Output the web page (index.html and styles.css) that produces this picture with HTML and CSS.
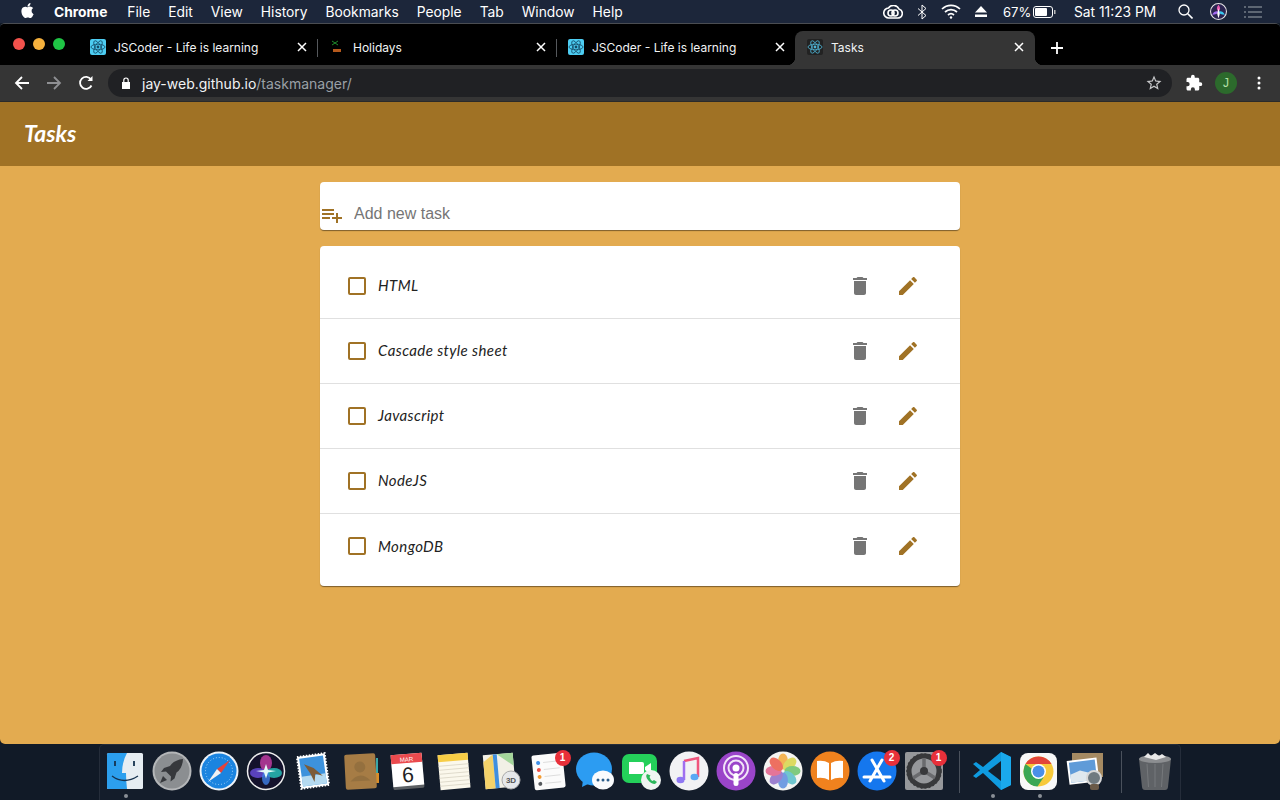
FILE: index.html
```html
<!DOCTYPE html>
<html lang="en">
<head>
  <meta charset="UTF-8">
  <title>Tasks</title>
  <link rel="stylesheet" href="styles.css">
</head>
<body>
  <svg class="defs" width="0" height="0">
    <symbol id="react" viewBox="0 0 16 16">
      <g fill="none" stroke="currentColor" stroke-width=".8">
        <ellipse cx="8" cy="8" rx="7" ry="2.8"/>
        <ellipse cx="8" cy="8" rx="7" ry="2.8" transform="rotate(60 8 8)"/>
        <ellipse cx="8" cy="8" rx="7" ry="2.8" transform="rotate(120 8 8)"/>
      </g>
      <circle cx="8" cy="8" r="1.4" fill="currentColor"/>
    </symbol>
    <symbol id="close" viewBox="0 0 10 10">
      <path d="M1 1l8 8M9 1l-8 8" stroke="currentColor" stroke-width="1.5" fill="none"/>
    </symbol>
    <symbol id="trash" viewBox="0 0 24 24">
      <path d="M6 19c0 1.1.9 2 2 2h8c1.1 0 2-.9 2-2V7H6v12zM19 4h-3.5l-1-1h-5l-1 1H5v2h14V4z"/>
    </symbol>
    <symbol id="pencil" viewBox="0 0 24 24">
      <path d="M3 17.25V21h3.75L17.81 9.94l-3.75-3.75L3 17.25zM20.71 7.04c.39-.39.39-1.02 0-1.41l-2.34-2.34c-.39-.39-1.02-.39-1.41 0l-1.83 1.83 3.75 3.75 1.83-1.83z"/>
    </symbol>
  </svg>

  <!-- mac menu bar -->
  <header class="menubar">
    <svg class="apple" viewBox="0 0 24 24" width="15" height="15" fill="#fff"><path d="M12.152 6.896c-.948 0-2.415-1.078-3.96-1.04-2.04.027-3.91 1.183-4.961 3.014-2.117 3.675-.546 9.103 1.519 12.09 1.013 1.454 2.208 3.09 3.792 3.039 1.52-.065 2.09-.987 3.935-.987 1.831 0 2.35.987 3.96.948 1.637-.026 2.676-1.48 3.676-2.948 1.156-1.688 1.636-3.325 1.662-3.415-.039-.013-3.182-1.221-3.22-4.857-.026-3.04 2.48-4.494 2.597-4.559-1.429-2.09-3.623-2.324-4.39-2.376-2-.156-3.675 1.09-4.61 1.09zM15.53 3.83c.843-1.012 1.4-2.427 1.245-3.83-1.207.052-2.662.805-3.532 1.818-.78.896-1.454 2.338-1.273 3.714 1.338.104 2.715-.688 3.559-1.701"/></svg>
    <nav class="menu">
      <b>Chrome</b><span class="menu-first">File</span><span>Edit</span><span>View</span><span>History</span><span>Bookmarks</span><span>People</span><span>Tab</span><span>Window</span><span>Help</span>
    </nav>
    <div class="status">
      <svg class="st-cc" viewBox="0 0 20 14" width="20" height="14" fill="none" stroke="#fff" stroke-width="1.6"><path d="M6 13a5 5 0 0 1-.5-10A6 6 0 0 1 16 4a4.6 4.6 0 0 1-1 9z"/><circle cx="8" cy="8" r="3"/><circle cx="12" cy="8" r="3"/></svg>
      <svg class="st-bt" viewBox="0 0 10 16" width="10" height="16" fill="none" stroke="#fff" stroke-width="1"><path d="M1 4.5l8 7L5 15V1l4 3.500L1 11.500"/></svg>
      <svg class="st-wifi" viewBox="0 0 20 15" width="20" height="15" fill="none" stroke="#fff" stroke-width="1.7"><path d="M1 5a13 13 0 0 1 18 0M4 8a9 9 0 0 1 12 0M7 11a4.500 4.500 0 0 1 6 0"/><circle cx="10" cy="13.500" r="1.200" fill="#fff" stroke="none"/></svg>
      <svg class="st-eject" viewBox="0 0 12 11" width="12" height="11" fill="#fff"><path d="M6 0l6 6.500H0zM0 8.500h12V11H0z"/></svg>
      <span class="st-pct">67%</span>
      <svg class="st-batt" viewBox="0 0 23 12" width="23" height="12"><rect x=".5" y=".5" width="19" height="11" rx="2.500" fill="none" stroke="#fff"/><rect x="2" y="2" width="12" height="8" rx="1" fill="#fff"/><rect x="21" y="4" width="1.500" height="4" fill="#bbb"/></svg>
      <span class="st-clock">Sat 11:23 PM</span>
      <svg class="st-search" viewBox="0 0 15 15" width="15" height="15" fill="none" stroke="#fff" stroke-width="1.300"><circle cx="6" cy="6" r="5"/><path d="M9.800 9.800L14.500 14.500" stroke-width="1.600"/></svg>
      <svg class="st-siri" viewBox="0 0 16 16" width="17" height="17"><circle cx="8" cy="8" r="7.500" fill="#2b2450" stroke="#e6e6e6"/><path d="M8 1.500Q11 6 8 8 5 6 8 1.500z" fill="#e85bb0"/><path d="M14 11Q9 11 8 8q4-1 6 3z" fill="#38c8f0"/><path d="M2 11q5 0 6-3-4-1-6 3z" fill="#a36bf0"/><path d="M8 5l1.200 5L8 14.500 6.800 10z" fill="#fff"/></svg>
      <svg class="st-list" viewBox="0 0 18 12" width="18" height="12" fill="#5d6673"><path d="M0 0h2v2H0zM4 0h14v2H4zM0 5h2v2H0zM4 5h14v2H4zM0 10h2v2H0zM4 10h14v2H4z"/></svg>
    </div>
  </header>

  <div class="window">
    <div class="tabstrip">
      <div class="traffic"><i class="red"></i><i class="amber"></i><i class="green"></i></div>
      <div class="tab">
        <svg class="favicon fav-cyan"><use href="#react"/></svg>
        <span class="tab-title">JSCoder - Life is learning</span>
        <svg class="tab-x"><use href="#close"/></svg>
      </div>
      <div class="tab tab-sep">
        <svg class="favicon" viewBox="0 0 16 16"><path d="M3 2l3 2-3 2M9 2L6 4l3 2" stroke="#1f8a2c" fill="none"/><path d="M4 10h8v3H4z" fill="#b5591c"/></svg>
        <span class="tab-title">Holidays</span>
        <svg class="tab-x"><use href="#close"/></svg>
      </div>
      <div class="tab tab-sep">
        <svg class="favicon fav-cyan"><use href="#react"/></svg>
        <span class="tab-title">JSCoder - Life is learning</span>
        <svg class="tab-x"><use href="#close"/></svg>
      </div>
      <div class="tab tab-active">
        <svg class="favicon fav-dark"><use href="#react"/></svg>
        <span class="tab-title">Tasks</span>
        <svg class="tab-x"><use href="#close"/></svg>
      </div>
      <svg class="newtab" viewBox="0 0 12 12" width="12" height="12"><path d="M6 0v12M0 6h12" stroke="#fff" stroke-width="1.800"/></svg>
    </div>

    <div class="toolbar">
      <svg class="tb-btn" viewBox="0 0 16 16" width="16" height="16" fill="none" stroke="#fff" stroke-width="1.800"><path d="M15 8H2M8 2L2 8l6 6"/></svg>
      <svg class="tb-btn" viewBox="0 0 16 16" width="16" height="16" fill="none" stroke="#8f9093" stroke-width="1.800"><path d="M1 8h13M8 2l6 6-6 6"/></svg>
      <svg class="tb-btn" viewBox="0 0 16 16" width="16" height="16" fill="none" stroke="#fff" stroke-width="1.800"><path d="M13.500 10.500A6 6 0 1 1 13 4.500"/><path d="M14.500 1v5h-5z" fill="#fff" stroke="none"/></svg>
      <div class="omnibox">
        <svg class="lock" viewBox="0 0 10 12" width="10" height="12" fill="#fff"><path d="M1 5h8v7H1z"/><path d="M2.800 5V3.200a2.200 2.200 0 0 1 4.400 0V5" fill="none" stroke="#fff" stroke-width="1.200"/></svg>
        <span class="url">jay-web.github.io<span class="url-path">/taskmanager/</span></span>
        <svg class="star" viewBox="0 0 24 24" width="18" height="18" fill="#c6c7c9"><path d="M22 9.240l-7.190-.62L12 2 9.190 8.630 2 9.240l5.460 4.730L5.820 21 12 17.270 18.180 21l-1.630-7.030L22 9.240zM12 15.400l-3.760 2.270 1-4.280-3.320-2.880 4.380-.38L12 6.100l1.710 4.040 4.380.38-3.320 2.880 1 4.280L12 15.400z"/></svg>
      </div>
      <svg class="puzzle" viewBox="0 0 24 24" width="18" height="18" fill="#fff"><path d="M20.500 11H19V7c0-1.100-.9-2-2-2h-4V3.500a2.500 2.500 0 0 0-5 0V5H4c-1.100 0-2 .9-2 2v3.800h1.500a2.700 2.700 0 0 1 0 5.400H2V20c0 1.100.9 2 2 2h3.800v-1.500a2.700 2.700 0 0 1 5.400 0V22H17c1.100 0 2-.9 2-2v-4h1.500a2.500 2.500 0 0 0 0-5z"/></svg>
      <span class="avatar">J</span>
      <svg class="kebab" viewBox="0 0 4 14" width="4" height="14" fill="#fff"><circle cx="2" cy="2" r="1.500"/><circle cx="2" cy="7" r="1.500"/><circle cx="2" cy="12" r="1.500"/></svg>
    </div>

    <!-- the app itself -->
    <div class="app">
      <div class="app-bar">Tasks</div>
      <main class="content">
        <form class="add-card">
          <svg class="add-icon" viewBox="0 0 24 24" width="24" height="24"><path d="M14 10H2v2h12v-2zm0-4H2v2h12V6zm4 8v-4h-2v4h-4v2h4v4h2v-4h4v-2h-4zM2 16h8v-2H2v2z"/></svg>
          <input class="add-input" type="text" placeholder="Add new task">
        </form>
        <ul class="task-list">
          <li class="task">
            <span class="check"></span><span class="task-name">HTML</span>
            <svg class="ic ic-del"><use href="#trash"/></svg><svg class="ic ic-edit"><use href="#pencil"/></svg>
          </li>
          <li class="task">
            <span class="check"></span><span class="task-name">Cascade style sheet</span>
            <svg class="ic ic-del"><use href="#trash"/></svg><svg class="ic ic-edit"><use href="#pencil"/></svg>
          </li>
          <li class="task">
            <span class="check"></span><span class="task-name">Javascript</span>
            <svg class="ic ic-del"><use href="#trash"/></svg><svg class="ic ic-edit"><use href="#pencil"/></svg>
          </li>
          <li class="task">
            <span class="check"></span><span class="task-name">NodeJS</span>
            <svg class="ic ic-del"><use href="#trash"/></svg><svg class="ic ic-edit"><use href="#pencil"/></svg>
          </li>
          <li class="task">
            <span class="check"></span><span class="task-name">MongoDB</span>
            <svg class="ic ic-del"><use href="#trash"/></svg><svg class="ic ic-edit"><use href="#pencil"/></svg>
          </li>
        </ul>
      </main>
    </div>
  </div>

  <!-- dock -->
  <footer class="dock-row">
    <div class="dock">
      <div class="dock-item has-dot"><svg viewBox="0 0 40 40"><rect x="2" y="2" width="36" height="36" rx="1.500" fill="#e6edf2"/><path d="M2 3.500Q2 2 3.500 2H22q-5 9-5 20h4q0 8 1 16H3.500Q2 38 2 36.500z" fill="#2c9fee"/><path d="M10 10v5M29 10v5" stroke="#16324f" stroke-width="1.800"/><path d="M7 25q12 9 26 0" fill="none" stroke="#16324f" stroke-width="1.400"/></svg></div>
      <div class="dock-item"><svg viewBox="0 0 40 40"><circle cx="20" cy="20" r="19.500" fill="#b4b6b8"/><circle cx="20" cy="20" r="17.500" fill="#8b8e91"/><path d="M31 8q-9 1-13 7l-6 2-3 4 5-.500 5 5-.500 5 4-3 2-6q6-4 6.500-13.500z" fill="#36383c"/><path d="M11 25l-3 7 7-3z" fill="#36383c"/></svg></div>
      <div class="dock-item"><svg viewBox="0 0 40 40"><circle cx="20" cy="20" r="19.500" fill="#eef3f8"/><circle cx="20" cy="20" r="17.500" fill="#1b84e0"/><circle cx="20" cy="20" r="13.500" fill="none" stroke="#a6d4f7" stroke-width="1" stroke-dasharray="1 2"/><path d="M31 9L18 18l4 4z" fill="#e8423a"/><path d="M9 31l13-9-4-4z" fill="#f2f2f2"/></svg></div>
      <div class="dock-item"><svg viewBox="0 0 40 40"><circle cx="20" cy="20" r="18.500" fill="#14122c" stroke="#eee" stroke-width="1.500"/><ellipse cx="20" cy="12" rx="6" ry="8" fill="#c83fa8" opacity=".8"/><ellipse cx="12" cy="22" rx="8" ry="5" fill="#6a4fe0" opacity=".8"/><ellipse cx="28" cy="22" rx="8" ry="5" fill="#28c8c0" opacity=".8"/><ellipse cx="20" cy="27" rx="4" ry="7" fill="#3f7fe8" opacity=".8"/><path d="M20 13l2 6 8 1-8 1.500-2 6-2-6-8-1.500 8-1z" fill="#e4fbf8"/></svg></div>
      <div class="dock-item"><svg viewBox="0 0 40 40"><g transform="rotate(-8 20 20)"><rect x="6" y="4" width="28" height="32" fill="#fff" stroke="#fff" stroke-width="2" stroke-dasharray="1.500 1.500"/><rect x="8" y="6" width="24" height="28" fill="#3d92dc"/><path d="M8 24h24v10H8z" fill="#b5daf0"/><path d="M12 12l9 5 8 9-7-3-2 8-3-9z" fill="#7d5c38"/></g></svg></div>
      <div class="dock-item"><svg viewBox="0 0 40 40"><path d="M36 7h2v24h-2z" fill="#3aa7a8"/><path d="M36 22h3v10h-3z" fill="#d98e2a"/><g transform="rotate(-3 20 20)"><rect x="5" y="3" width="31" height="35" rx="2" fill="#a67c45"/><circle cx="20" cy="16" r="5.500" fill="#94703f"/><path d="M10 30q10-11 20 0z" fill="#94703f"/></g></svg></div>
      <div class="dock-item"><svg viewBox="0 0 40 40"><g transform="rotate(-5 20 20)"><rect x="5" y="4" width="31" height="34" rx="1.500" fill="#5b5f63"/><rect x="5" y="3" width="31" height="32" fill="#fff"/><path d="M5 3h31v9H5z" fill="#ea4a4e"/><text x="20.500" y="10.500" class="cal-month">MAR</text><text x="20.500" y="31" class="cal-day">6</text></g></svg></div>
      <div class="dock-item"><svg viewBox="0 0 40 40"><g transform="rotate(-5 20 20)"><rect x="5" y="3" width="30" height="35" fill="#fbf8ec"/><path d="M5 3h30v7H5z" fill="#f7cd46"/><path d="M5 14h30M5 18h30M5 22h30M5 26h30M5 30h30M5 34h30" stroke="#d9d5c5" stroke-width=".8"/></g></svg></div>
      <div class="dock-item"><svg viewBox="0 0 40 40"><g transform="rotate(-5 18 18)"><rect x="3" y="3" width="30" height="34" fill="#f2f0e6"/><path d="M17 3h16v13z" fill="#a4d69b"/><path d="M3 10l10-7v34H3z" fill="#f4d26a"/><path d="M15 3v34" stroke="#3f8fe0" stroke-width="4"/></g><circle cx="30" cy="29" r="9" fill="#e6e8ea" stroke="#aaa"/><text x="30" y="32" class="maps-3d">3D</text></svg></div>
      <div class="dock-item"><svg viewBox="0 0 40 40"><g transform="rotate(-6 20 20)"><rect x="5" y="3" width="31" height="35" rx="2" fill="#fbfbfb"/><circle cx="11" cy="11" r="2" fill="#3f8fe8"/><circle cx="11" cy="18" r="2" fill="#ee4f45"/><circle cx="11" cy="25" r="2" fill="#f39b30"/><circle cx="11" cy="32" r="2" fill="#55585c"/><path d="M16 11h16M16 18h16M16 25h16M16 32h16" stroke="#ddd"/></g></svg><span class="badge">1</span></div>
      <div class="dock-item"><svg viewBox="0 0 40 40"><ellipse cx="19" cy="18" rx="18" ry="16.500" fill="#2c9cf2"/><path d="M8 29l-1 7 8-4z" fill="#2c9cf2"/><ellipse cx="28" cy="29" rx="11" ry="9.500" fill="#fafbfd"/><circle cx="23" cy="29" r="1.500" fill="#2b5d8a"/><circle cx="28" cy="29" r="1.500" fill="#2b5d8a"/><circle cx="33" cy="29" r="1.500" fill="#2b5d8a"/></svg></div>
      <div class="dock-item"><svg viewBox="0 0 40 40"><rect x="0" y="3" width="35" height="29" rx="7" fill="#24d05a"/><path d="M7 11h13a2 2 0 0 1 2 2v8a2 2 0 0 1-2 2H7z" fill="#fff"/><path d="M23 16l6-4v11l-6-4z" fill="#fff"/><circle cx="29" cy="29" r="10" fill="#f0f4f1"/><path d="M25 23q-2 2 1 6t7 4l2-2-3-2-1.500 1q-2-1-3-4l1-1.500z" fill="#2bb85a"/></svg></div>
      <div class="dock-item"><svg viewBox="0 0 40 40"><circle cx="20" cy="20" r="19.500" fill="#f2f2f4"/><path d="M15 10l14-3v19" fill="none" stroke="#f0567e" stroke-width="2.500"/><path d="M15 10v19" fill="none" stroke="#a06ff0" stroke-width="2.500"/><ellipse cx="11.500" cy="29" rx="4" ry="3.200" fill="#8f78f2"/><ellipse cx="25.500" cy="26" rx="4" ry="3.200" fill="#5aa8f4"/></svg></div>
      <div class="dock-item"><svg viewBox="0 0 40 40"><circle cx="20" cy="20" r="19.500" fill="#9a45c9"/><g fill="none" stroke="#f1e4f8" stroke-width="2"><circle cx="20" cy="17" r="12"/><circle cx="20" cy="17" r="7.500"/></g><circle cx="20" cy="17" r="3.500" fill="#fff"/><rect x="17.500" y="22" width="5" height="13" rx="2.500" fill="#fff"/></svg></div>
      <div class="dock-item"><svg viewBox="0 0 40 40"><circle cx="20" cy="20" r="19.500" fill="#f4f4f2"/><g opacity=".85"><ellipse cx="20" cy="10.500" rx="5" ry="8" fill="#f3a93a"/><ellipse cx="20" cy="10.500" rx="5" ry="8" fill="#d8d64a" transform="rotate(45 20 20)"/><ellipse cx="20" cy="10.500" rx="5" ry="8" fill="#6cc36a" transform="rotate(90 20 20)"/><ellipse cx="20" cy="10.500" rx="5" ry="8" fill="#58bfc9" transform="rotate(135 20 20)"/><ellipse cx="20" cy="10.500" rx="5" ry="8" fill="#5c8fe0" transform="rotate(180 20 20)"/><ellipse cx="20" cy="10.500" rx="5" ry="8" fill="#8f6ec9" transform="rotate(225 20 20)"/><ellipse cx="20" cy="10.500" rx="5" ry="8" fill="#e2608a" transform="rotate(270 20 20)"/><ellipse cx="20" cy="10.500" rx="5" ry="8" fill="#ec5a48" transform="rotate(315 20 20)"/></g></svg></div>
      <div class="dock-item"><svg viewBox="0 0 40 40"><circle cx="20" cy="20" r="19.500" fill="#f0821e"/><path d="M19 12q-5-3-12-2v17q7-1 12 2zM21 12q5-3 12-2v17q-7-1-12 2z" fill="#fff"/></svg></div>
      <div class="dock-item"><svg viewBox="0 0 40 40"><circle cx="20" cy="20" r="19.500" fill="#1577ee"/><path d="M15 9l12 21M25 9L13 30M7 26h26" stroke="#fff" stroke-width="3" stroke-linecap="round"/></svg><span class="badge">2</span></div>
      <div class="dock-item"><svg viewBox="0 0 40 40"><rect x="1" y="1" width="38" height="38" rx="2" fill="#96989b"/><circle cx="20" cy="20" r="15" fill="none" stroke="#38393b" stroke-width="5"/><circle cx="20" cy="20" r="17" fill="none" stroke="#38393b" stroke-width="1.500" stroke-dasharray="2 2"/><path d="M20 20V7M20 20L9 27M20 20l11 7" stroke="#6a6b6e" stroke-width="3.500"/><circle cx="20" cy="20" r="4" fill="#38393b"/></svg><span class="badge">1</span></div>
      <div class="dock-gap"></div>
      <div class="dock-item has-dot"><svg viewBox="0 0 40 40"><path d="M29 1l10 5v28l-10 5L11 22l-7 5-3-2 7-6-7-6 3-2 7 5z" fill="#0f9be0"/><path d="M29 10v20l-13-10z" fill="#13202e"/><path d="M29 1l10 5v28l-10 5z" fill="#1aa9ec"/></svg></div>
      <div class="dock-item has-dot"><svg viewBox="0 0 40 40"><rect x="1" y="2" width="37" height="37" rx="8" fill="#f8f8f8"/><circle cx="19.500" cy="20.500" r="15" fill="#f7c93a"/><path d="M6.500 13A15 15 0 0 1 32.500 13H19.500z" fill="#e2453a"/><path d="M6.500 13a15 15 0 0 0 12 22.500l6-9z" fill="#3aa655"/><circle cx="19.500" cy="20.500" r="7.500" fill="#fff"/><circle cx="19.500" cy="20.500" r="6" fill="#4a8fe8"/></svg></div>
      <div class="dock-item"><svg viewBox="0 0 40 40"><rect x="6" y="2" width="31" height="24" fill="#a58a62"/><g transform="rotate(-7 18 20)"><rect x="2" y="8" width="30" height="24" fill="#fff"/><rect x="4" y="10" width="26" height="20" fill="#5f9bd8"/><path d="M4 22l10-3 16 6v5H4z" fill="#dfe8ee"/></g><circle cx="28" cy="27" r="7" fill="#6f7a80" stroke="#d8d8d8" stroke-width="2"/><rect x="24" y="33" width="9" height="6" rx="2" fill="#6a5a48"/></svg></div>
      <div class="dock-gap dock-gap-wide"></div>
      <div class="dock-item"><svg viewBox="0 0 40 40"><path d="M4 8h32l-3 28q-.3 3-3 3H10q-2.700 0-3-3z" fill="#5f6266"/><ellipse cx="20" cy="8" rx="16" ry="4" fill="#8c8e91"/><path d="M9 6l4-4 3 3 4-3 4 3 3-2 4 3-10 3z" fill="#e8e8e8"/><path d="M12 13l1.500 23M20 13v23M28 13l-1.500 23" stroke="#76797c"/></svg></div>
    </div>
  </footer>
</body>
</html>
```

FILE: styles.css
```css
* {
  box-sizing: border-box;
}

html,
body {
  margin: 0;
  height: 800px;
  overflow: hidden;
}

body {
  display: flex;
  flex-direction: column;
  background-color: #111a27;
  font-family: "Liberation Sans", Arial, sans-serif;
}

.defs {
  position: absolute;
}

/* menu bar */
.menubar {
  display: flex;
  align-items: center;
  height: 23px;
  flex: none;
  padding-left: 20px;
  background-color: #1c263a;
  color: #fff;
  font-family: Inter, "Liberation Sans", sans-serif;
  font-size: 13.8px;
}

.apple {
  margin-bottom: 2px;
}

.menu {
  display: flex;
  gap: 18px;
  margin-left: 19px;
}

.menu b {
  font-weight: 700;
}

.menu-first {
  margin-left: 2px;
}

.status {
  display: flex;
  align-items: center;
  margin-left: auto;
}

.st-cc { margin-right: 14px; margin-left: -1px; }
.st-bt { margin-right: 14px; }
.st-wifi { margin-right: 14px; }
.st-eject { margin-right: 16px; }
.st-pct { width: 30px; font-size: 13px; }
.st-batt { margin-right: 18px; }
.st-clock { width: 104px; }
.st-search { margin-right: 17px; }
.st-siri { margin-right: 17px; }
.st-list { margin-right: 18px; }

/* browser window */
.window {
  display: flex;
  flex-direction: column;
  height: 721px;
  flex: none;
  border-radius: 5px;
  overflow: hidden;
  background-color: #000;
  border-top: 1px solid #4a4d52;
}

.tabstrip {
  display: flex;
  align-items: flex-end;
  height: 41px;
  flex: none;
  background-color: #000;
}

.traffic {
  display: flex;
  align-self: center;
  gap: 8px;
  width: 78px;
  padding-left: 13px;
  margin-top: -1px;
}

.traffic i {
  width: 12px;
  height: 12px;
  border-radius: 50%;
}

.red { background-color: #f2524c; }
.amber { background-color: #f6b13d; }
.green { background-color: #1fc545; }

.tab {
  display: flex;
  align-items: center;
  width: 239px;
  height: 34px;
  padding: 0 8px 2px 12px;
  color: #f1f3f4;
  font-family: Inter, "Liberation Sans", sans-serif;
  font-size: 12px;
  border-radius: 8px 8px 0 0;
}

.tab-sep {
  position: relative;
}

.tab-sep::before {
  content: "";
  position: absolute;
  left: 0;
  top: 8px;
  height: 18px;
  width: 1px;
  background-color: #55585c;
}

/* the small flares at the foot of the active tab */
.tab-active {
  position: relative;
  width: 240px;
  padding-right: 9px;
  background-color: #353535;
}

.tab-active::before,
.tab-active::after {
  content: "";
  position: absolute;
  bottom: 0;
  width: 8px;
  height: 8px;
}

.tab-active::before {
  left: -8px;
  background: radial-gradient(circle at 0 0, #000 8px, #353535 8.5px);
}

.tab-active::after {
  right: -8px;
  background: radial-gradient(circle at 100% 0, #000 8px, #353535 8.5px);
}

.favicon {
  width: 16px;
  height: 16px;
  flex: none;
  margin-right: 8px;
  border-radius: 2px;
}

.fav-cyan {
  background-color: #4dcdf2;
  color: #144a66;
}

.fav-dark {
  background-color: #222;
  color: #4fb5d6;
}

.tab-title {
  flex: 1;
}

.tab-x {
  width: 10px;
  height: 10px;
  color: #fff;
  margin-right: 2px;
}

.newtab {
  align-self: center;
  margin: 7px 0 0 16px;
}

.toolbar {
  display: flex;
  align-items: center;
  height: 37px;
  flex: none;
  padding-left: 14px;
  background-color: #353535;
  border-bottom: 1px solid #2a2a2a;
}

.tb-btn {
  flex: none;
  margin-right: 16px;
}

.omnibox {
  display: flex;
  align-items: center;
  width: 1064px;
  height: 28px;
  margin-left: -2px;
  padding: 0 9px 0 13px;
  background-color: #202124;
  border-radius: 14px;
}

.lock {
  margin-right: 11px;
}

.url {
  flex: 1;
  color: #f1f3f4;
  font-family: Inter, "Liberation Sans", sans-serif;
  font-size: 14px;
}

.url-path {
  color: #9aa0a6;
}

.puzzle {
  margin-left: 13px;
}

.avatar {
  display: flex;
  align-items: center;
  justify-content: center;
  width: 22px;
  height: 22px;
  margin-left: 12px;
  border-radius: 50%;
  background-color: #2c6a2c;
  color: #b5e0a8;
  font-size: 12px;
}

.kebab {
  margin-left: 20px;
}

/* task manager */
.app {
  flex: 1;
  display: flex;
  flex-direction: column;
  background-color: #e3ab50;
}

.app-bar {
  height: 64px;
  flex: none;
  padding-left: 24px;
  background-color: #a07225;
  color: #fff;
  font-family: Lato, sans-serif;
  font-style: italic;
  font-weight: 700;
  font-size: 23px;
  line-height: 62px;
}

.content {
  width: 640px;
  margin: 16px auto 0;
}

.add-card {
  display: flex;
  align-items: center;
  height: 48px;
  background-color: #fff;
  border-radius: 4px;
  box-shadow: 0 2px 1px -1px rgba(0, 0, 0, .2), 0 1px 1px rgba(0, 0, 0, .3);
}

.add-icon {
  fill: #a07225;
  margin-top: 17px;
}

.add-input {
  flex: 1;
  margin-left: 10px;
  padding: 16px 0 0;
  border: 0;
  outline: 0;
  background: transparent;
  font-family: "Liberation Sans", Arial, sans-serif;
  font-size: 16px;
}

.add-input::placeholder {
  color: #757575;
}

.task-list {
  list-style: none;
  margin: 16px 0 0;
  padding: 8px 0 7px;
  background-color: #fff;
  border-radius: 4px;
  box-shadow: 0 2px 1px -1px rgba(0, 0, 0, .2), 0 1px 1px rgba(0, 0, 0, .3);
}

.task {
  display: flex;
  align-items: center;
  height: 65px;
  padding: 0 40px 1px 28px;
  border-bottom: 1px solid #e0e0e0;
}

.task:last-child {
  border-bottom: 0;
}

.check {
  width: 18px;
  height: 18px;
  flex: none;
  border: 2px solid #a07225;
  border-radius: 2px;
}

.task-name {
  flex: 1;
  margin-left: 12px;
  padding-bottom: 1px;
  color: #222;
  font-family: Lato, sans-serif;
  font-style: italic;
  font-size: 15px;
  letter-spacing: .4px;
}

.ic {
  width: 24px;
  height: 24px;
  flex: none;
}

.ic-del {
  fill: #757575;
}

.ic-edit {
  fill: #a07225;
  margin-left: 24px;
}

/* dock */
.dock-row {
  display: flex;
  height: 56px;
  flex: none;
  padding-left: 99px;
}

.dock {
  display: flex;
  width: 1082px;
  height: 56px;
  padding: 6px 0 0 1.5px;
  background-color: #141d2b;
  border: 1px solid #252d3a;
  border-bottom: 0;
  border-radius: 5px 5px 0 0;
}

.dock-item {
  position: relative;
  display: flex;
  justify-content: center;
  width: 47px;
  height: 40px;
  flex: none;
}

.dock-item svg {
  width: 40px;
  height: 40px;
}

.has-dot::after {
  content: "";
  position: absolute;
  left: 22px;
  bottom: -7px;
  width: 4px;
  height: 4px;
  border-radius: 50%;
  background-color: #8a8f96;
}

.dock-gap {
  position: relative;
  width: 21px;
  flex: none;
}

.dock-gap-wide {
  width: 22px;
}

.dock-gap::after {
  content: "";
  position: absolute;
  left: 11px;
  top: 0;
  width: 1px;
  height: 42px;
  background-color: #4a515c;
}

.badge {
  position: absolute;
  top: -1px;
  right: 1px;
  width: 16px;
  height: 16px;
  border-radius: 50%;
  background-color: #e8303a;
  color: #fff;
  font-size: 10px;
  font-weight: 700;
  line-height: 16px;
  text-align: center;
}

.cal-month {
  fill: #fff;
  font-size: 6px;
  text-anchor: middle;
}

.cal-day {
  fill: #222;
  font-size: 21px;
  text-anchor: middle;
}

.maps-3d {
  fill: #555;
  font-size: 8px;
  font-weight: 700;
  text-anchor: middle;
}
```
